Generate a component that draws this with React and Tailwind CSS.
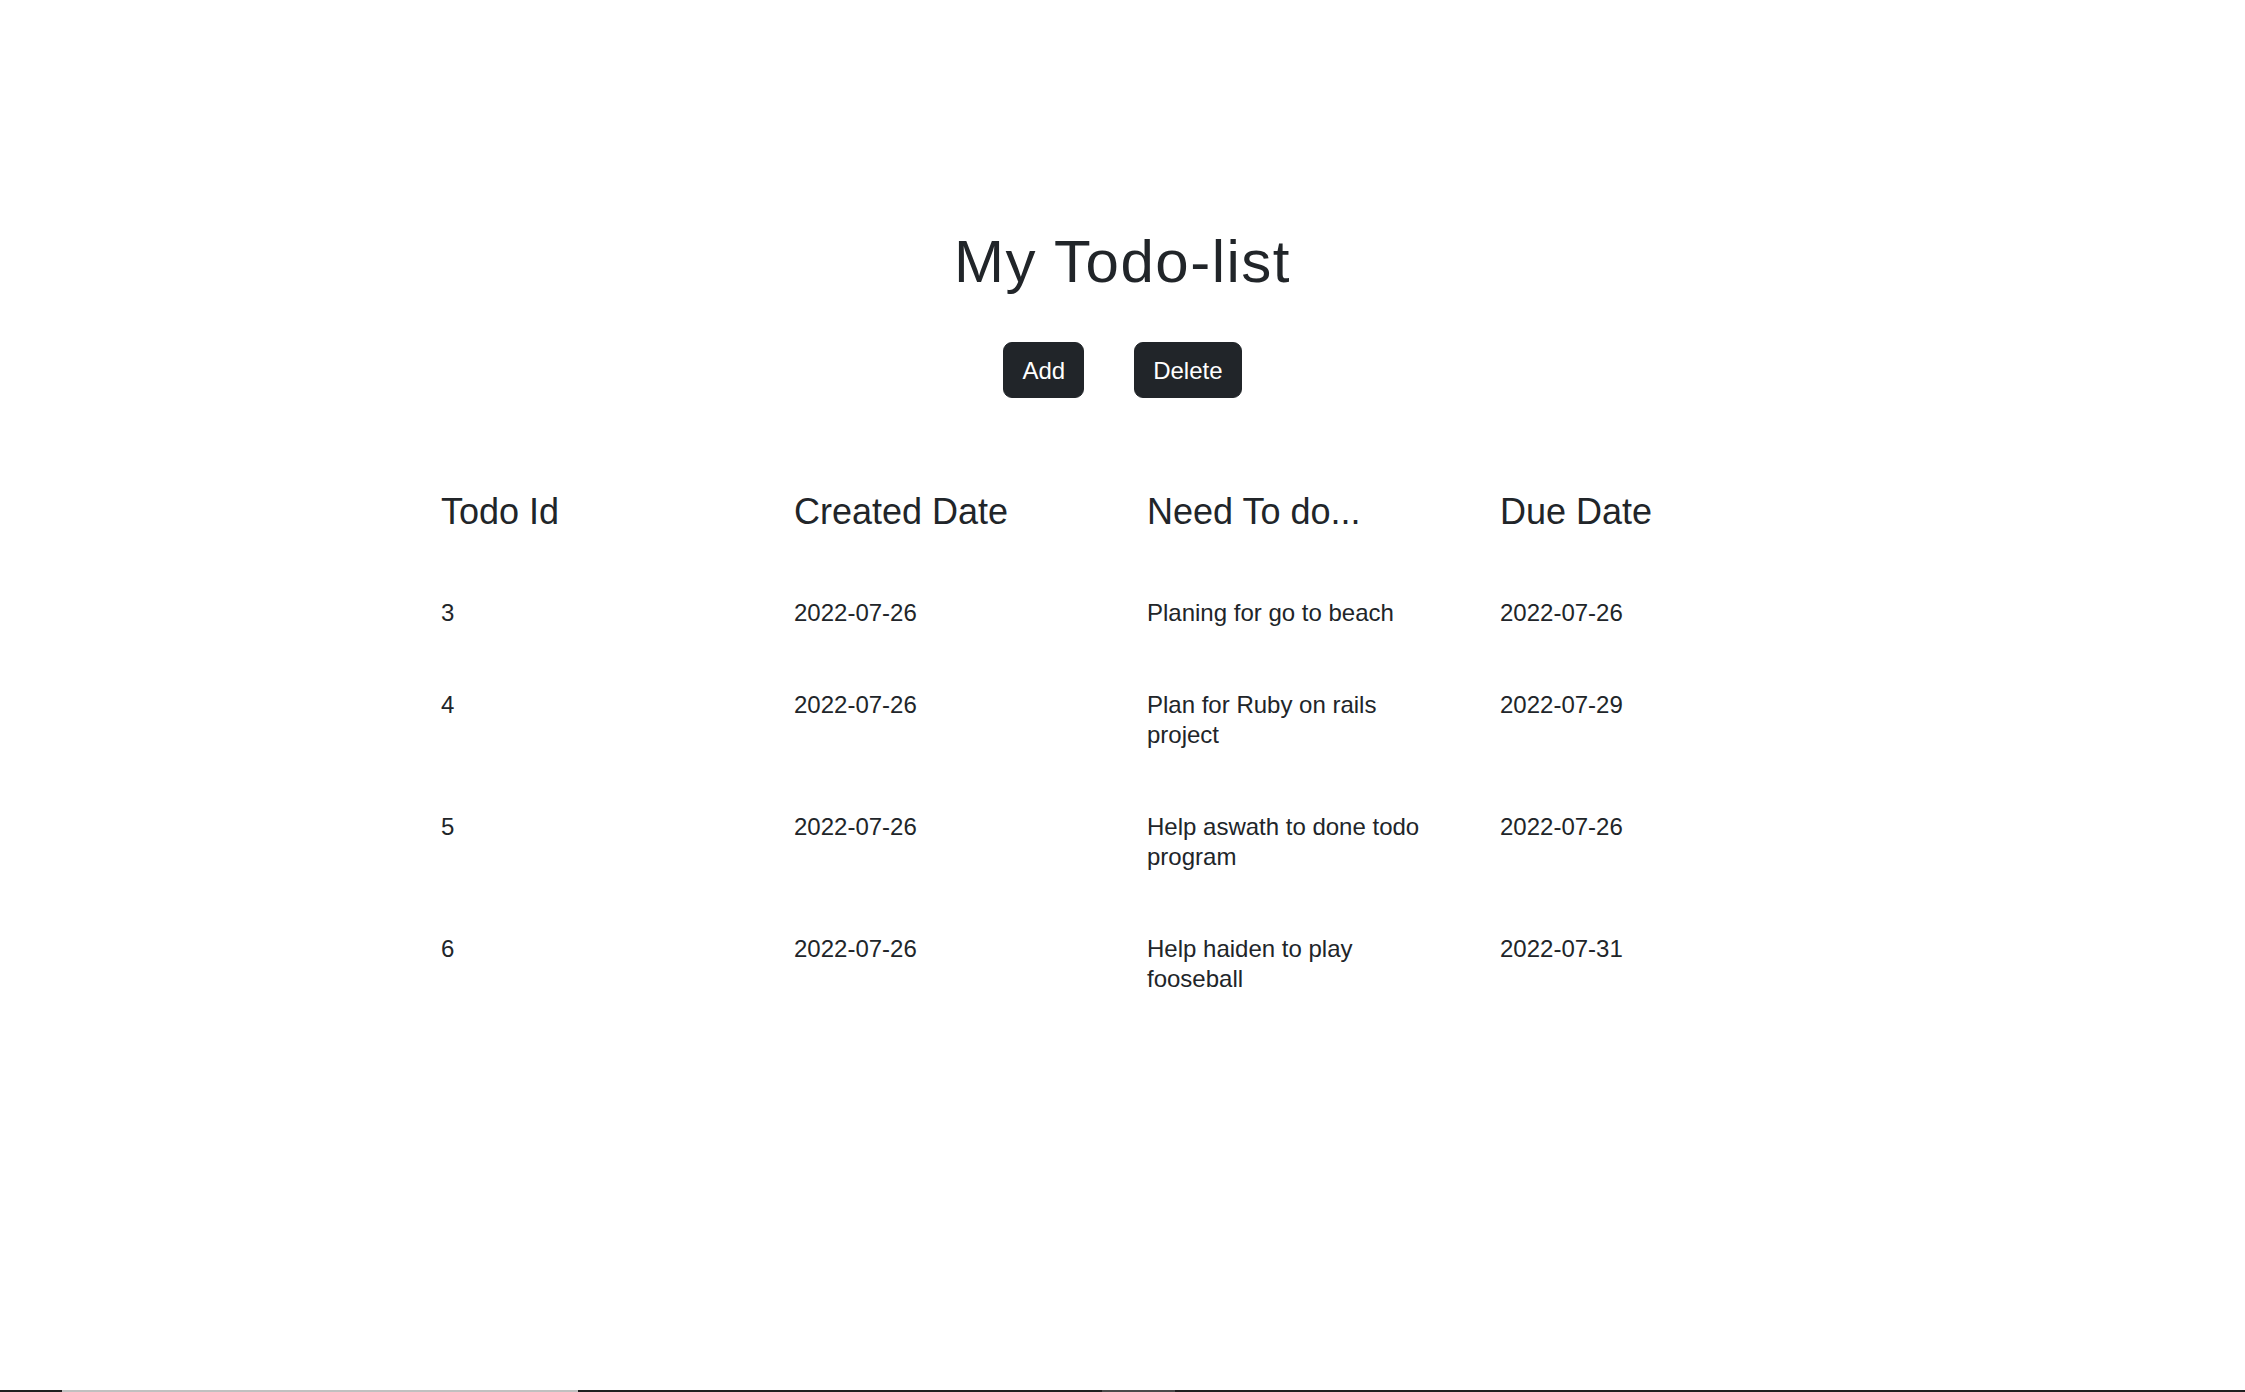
import React from 'react';

const todos = [
  { id: 3, created: '2022-07-26', task: 'Planing for go to beach', due: '2022-07-26' },
  { id: 4, created: '2022-07-26', task: 'Plan for Ruby on rails project', due: '2022-07-29' },
  { id: 5, created: '2022-07-26', task: 'Help aswath to done todo program', due: '2022-07-26' },
  { id: 6, created: '2022-07-26', task: 'Help haiden to play fooseball', due: '2022-07-31' },
];

const font = { fontFamily: '"Segoe UI", "Liberation Sans", Arial, sans-serif' };

export default function App() {
  return (
    <div className="min-h-screen flex flex-col bg-white text-[#212529]" style={font}>
      <main className="flex-1 pt-[226px]">
        <h1 className="text-center text-[60px] leading-[72px] font-medium tracking-[1.5px]">My Todo-list</h1>

        <div className="flex justify-center gap-[50px] mt-[44px]">
          <button className="bg-[#212529] border-[1.5px] border-[#212529] text-white text-[24px] leading-[36px] px-[18px] pt-[10px] pb-[8px] rounded-[9px]">
            Add
          </button>
          <button className="bg-[#212529] border-[1.5px] border-[#212529] text-white text-[24px] leading-[36px] px-[18px] pt-[10px] pb-[8px] rounded-[9px]">
            Delete
          </button>
        </div>

        <table className="table-fixed w-[1412px] ml-[429px] mt-[80px] border-collapse">
          <thead>
            <tr>
              <th className="w-[353px] text-left font-medium text-[36px] leading-[43px] px-[12px] pt-[12px] pb-[33px]">Todo Id</th>
              <th className="w-[353px] text-left font-medium text-[36px] leading-[43px] px-[12px] pt-[12px] pb-[33px]">Created Date</th>
              <th className="w-[353px] text-left font-medium text-[36px] leading-[43px] px-[12px] pt-[12px] pb-[33px]">Need To do...</th>
              <th className="w-[353px] text-left font-medium text-[36px] leading-[43px] px-[12px] pt-[12px] pb-[33px]">Due Date</th>
            </tr>
          </thead>
          <tbody>
            {todos.map((t) => (
              <tr key={t.id} className="align-top text-[24px] leading-[30px]">
                <td className="px-[12px] pt-[32px] pb-[30px]">{t.id}</td>
                <td className="px-[12px] pt-[32px] pb-[30px]">{t.created}</td>
                <td className="pl-[12px] pr-[60px] pt-[32px] pb-[30px]">{t.task}</td>
                <td className="px-[12px] pt-[32px] pb-[30px]">{t.due}</td>
              </tr>
            ))}
          </tbody>
        </table>
      </main>

      {/* strip along the bottom edge */}
      <div className="flex h-[2px]">
        <div className="w-[62px] bg-[#1f1f1f]"></div>
        <div className="w-[516px] bg-[#c0c0c0]"></div>
        <div className="w-[524px] bg-[#1f1f1f]"></div>
        <div className="w-[73px] bg-[#4a4a4a]"></div>
        <div className="flex-1 bg-[#1f1f1f]"></div>
      </div>
    </div>
  );
}
